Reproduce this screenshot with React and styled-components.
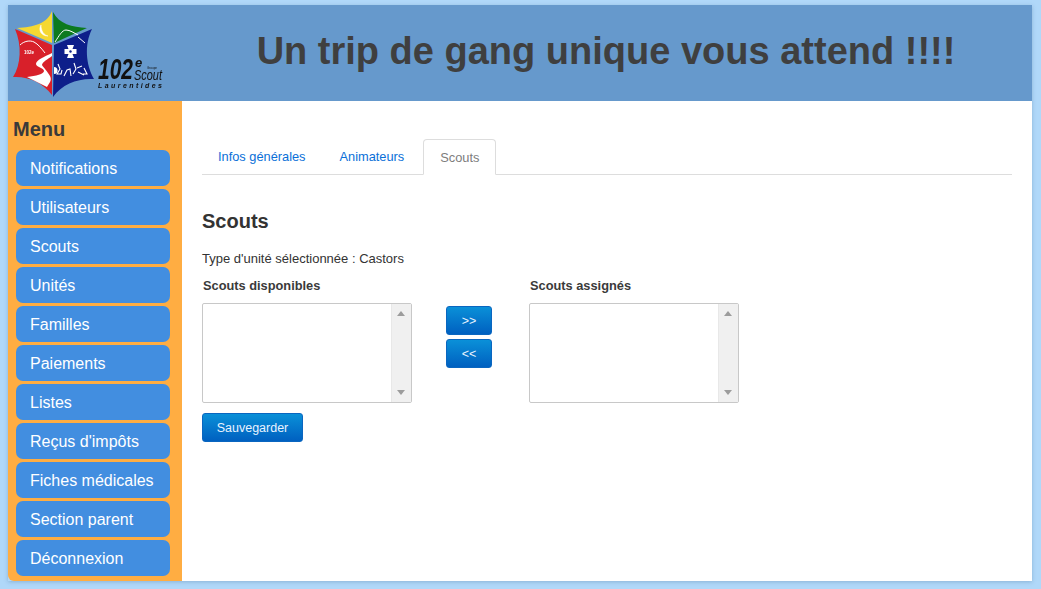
import React from 'react';
import styled, { createGlobalStyle } from 'styled-components';

const GlobalStyle = createGlobalStyle`
  html, body {
    margin: 0;
    padding: 0;
    height: 100%;
    background: #b0d8f9;
    font-family: "Liberation Sans", Arial, sans-serif;
    color: #3a3a3a;
  }
`;

const Page = styled.div`
  width: 1024px;
  height: 576px;
  margin: 5px 0 0 8px;
  display: flex;
  flex-direction: column;
  box-shadow: 0 1px 4px rgba(70, 110, 150, 0.35);
`;

const Banner = styled.header`
  height: 96px;
  flex: none;
  background: #6699cc;
  display: flex;
  align-items: center;
`;

const LogoBox = styled.div`
  width: 174px;
  flex: none;
  height: 100%;
  padding: 5px 0 0 4px;
  box-sizing: border-box;
  filter: blur(0.35px);
`;

const Slogan = styled.h1`
  flex: 1;
  margin: 0 2px 3px 0;
  text-align: center;
  font-size: 38px;
  font-weight: bold;
  color: #3f3f3f;
`;

const Body = styled.div`
  flex: 1;
  display: flex;
  min-height: 0;
`;

const Sidebar = styled.nav`
  width: 174px;
  flex: none;
  background: #ffad42;
  padding: 17px 12px 0 8px;
  box-sizing: border-box;
  border-bottom-left-radius: 6px;
`;

const MenuTitle = styled.div`
  font-size: 20px;
  font-weight: bold;
  line-height: 23px;
  margin: 0 0 9px -3px;
  color: #3a3a3a;
`;

const MenuList = styled.ul`
  list-style: none;
  margin: 0;
  padding: 0;
  display: flex;
  flex-direction: column;
  gap: 3px;
`;

const MenuItem = styled.li`
  height: 36px;
  line-height: 38px;
  background: #428ee0;
  border-radius: 7px;
  color: #fff;
  font-size: 16px;
  padding-left: 14px;
`;

const Main = styled.main`
  flex: 1;
  background: #fff;
  padding: 38px 20px 0;
`;

const Tabs = styled.div`
  display: flex;
  height: 35px;
  border-bottom: 1px solid #dddddd;
`;

const Tab = styled.div`
  box-sizing: border-box;
  line-height: 36px;
  font-size: 12.8px;
  padding: 0 16px;
  margin-right: 2px;
  color: ${p => (p.$active ? '#7d7d7d' : '#0a6fd8')};
  ${p =>
    p.$active &&
    `
    margin-left: 1px;
    background: #fff;
    height: 36px;
    border: 1px solid #dddddd;
    border-bottom-color: #fff;
    border-radius: 4px 4px 0 0;
  `}
`;

const Heading = styled.h2`
  margin: 34px 0 0;
  font-size: 20px;
  line-height: 24px;
  font-weight: bold;
  color: #333;
`;

const Info = styled.p`
  margin: 18px 0 0;
  font-size: 13px;
  line-height: 16px;
  color: #333;
`;

const Picker = styled.div`
  display: flex;
  margin-top: 10px;
`;

const Column = styled.div`
  width: 210px;
  flex: none;
`;

const ColLabel = styled.div`
  font-size: 12.8px;
  font-weight: bold;
  line-height: 18px;
  height: 17px;
  margin-left: 1px;
  margin-bottom: 9px;
  color: #3a3a3a;
`;

const ListBox = styled.div`
  height: 100px;
  box-sizing: border-box;
  border: 1px solid #c8c8c8;
  border-radius: 2px;
  display: flex;
  justify-content: flex-end;
  background: #fff;
`;

const ScrollTrack = styled.div`
  width: 20px;
  background: #f0f0f0;
  border-left: 1px solid #e8e8e8;
  box-sizing: border-box;
  display: flex;
  flex-direction: column;
  justify-content: space-between;
  align-items: center;
  padding: 7px 2px 7px 0;
`;

const Arrow = styled.span`
  width: 0;
  height: 0;
  border-left: 4.5px solid transparent;
  border-right: 4.5px solid transparent;
  ${p =>
    p.$up
      ? 'border-bottom: 5px solid #9c9c9c;'
      : 'border-top: 5px solid #9c9c9c;'}
`;

const MoveButtons = styled.div`
  width: 117px;
  flex: none;
  display: flex;
  flex-direction: column;
  gap: 4px;
  padding: 29px 0 0 34px;
  box-sizing: border-box;
`;

const BlueButton = styled.button`
  display: block;
  width: ${p => p.$w}px;
  height: 29px;
  padding: 0;
  font-family: "Liberation Sans", Arial, sans-serif;
  font-size: 12.5px;
  color: #e8f3ff;
  border: 1px solid #0a66c0;
  border-radius: 3px;
  background: linear-gradient(to bottom, #0a90d8, #0060c0);
`;

const SaveRow = styled.div`
  margin-top: 10px;
`;

const items = [
  'Notifications',
  'Utilisateurs',
  'Scouts',
  'Unités',
  'Familles',
  'Paiements',
  'Listes',
  "Reçus d'impôts",
  'Fiches médicales',
  'Section parent',
  'Déconnexion',
];

// the troop logo: four coloured sails plus the wordmark on the right
const Logo = () => (
  <svg width="160" height="88" viewBox="0 0 160 88" fontFamily="Liberation Sans, Arial, sans-serif">
    <path d="M40 1 C35 14 22 17 5 18 L40 33 Z" fill="#f5d832" />
    <path d="M41 2 C47 14 60 17 75 18 L42 33 Z" fill="#0c7a1e" />
    <path d="M80 19 C72 35 74 55 82 69 C66 68 50 74 41 87 L42 35 Z" fill="#0e1f8a" />
    <path d="M3 19 C10 35 9 55 1 67 C16 66 30 72 40 85 L40 35 Z" fill="#d8202a" />
    <path d="M29 15 C26 20 29 26 36 26 C32 25 29 21 29 15 Z" fill="#fff" stroke="#fff" strokeWidth="0.5" />
    <path d="M43 32 C47 26 50 20 54 20 C58 20 62 23 66 25" fill="none" stroke="#fff" strokeWidth="1" />
    <path d="M8 35 C12 31 18 30 22 32 C26 34 30 39 33 43" fill="none" stroke="#fff" strokeWidth="1" />
    <text x="12" y="44" fontSize="4.5" fontWeight="bold" fill="#fff">102e</text>
    <path d="M40 43 C32 47 24 50 24 54 C24 57 32 58 32 61 C32 64 24 66 15 67 L35 77 C38 72 40 70 38 66 C36 62 31 57 30 55 C30 52 36 49 40 46 Z" fill="#fff" />
    <path d="M55 35 h7 l-1.5 4 h4 v5 h-4 l1.5 4 h-7 l1.5 -4 h-4 v-5 h4 Z" fill="#fff" />
    <circle cx="58.5" cy="41.5" r="1.2" fill="#0e1f8a" />
    <path d="M66 27 L73 33" stroke="#fff" strokeWidth="1" />
    <path d="M42 57 a3.5 3.5 0 0 1 0 7 Z" fill="#fff" />
    <path d="M46 54 l2 5 -3 5 h4 l1 -4 M52 66 l3 -6 3 -1 1 7 M62 53 l2 6 -3 5 M65 58 l5 -2 M66 62 l6 3 M72 58 l3 6 h-4" fill="none" stroke="#fff" strokeWidth="1.1" />
    <text x="86" y="69" fontSize="29" fontWeight="bold" fontStyle="italic" fill="#111" textLength="35" lengthAdjust="spacingAndGlyphs">102</text>
    <text x="123" y="57" fontSize="13" fontWeight="bold" fontStyle="italic" fill="#111">e</text>
    <text x="135" y="59" fontSize="4" fill="#111" textLength="10" lengthAdjust="spacingAndGlyphs">Groupe</text>
    <text x="122" y="70" fontSize="14" fontStyle="italic" fill="#111" textLength="28" lengthAdjust="spacingAndGlyphs">Scout</text>
    <text x="86" y="78" fontSize="7" fontWeight="bold" fontStyle="italic" fill="#111" textLength="64">Laurentides</text>
  </svg>
);

const App = () => (
  <>
    <GlobalStyle />
    <Page>
      <Banner>
        <LogoBox>
          <Logo />
        </LogoBox>
        <Slogan>Un trip de gang unique vous attend !!!!</Slogan>
      </Banner>
      <Body>
        <Sidebar>
          <MenuTitle>Menu</MenuTitle>
          <MenuList>
            {items.map(item => (
              <MenuItem key={item}>{item}</MenuItem>
            ))}
          </MenuList>
        </Sidebar>
        <Main>
          <Tabs>
            <Tab>Infos générales</Tab>
            <Tab>Animateurs</Tab>
            <Tab $active>Scouts</Tab>
          </Tabs>
          <Heading>Scouts</Heading>
          <Info>Type d'unité sélectionnée : Castors</Info>
          <Picker>
            <Column>
              <ColLabel>Scouts disponibles</ColLabel>
              <ListBox>
                <ScrollTrack>
                  <Arrow $up />
                  <Arrow />
                </ScrollTrack>
              </ListBox>
            </Column>
            <MoveButtons>
              <BlueButton $w={46}>&gt;&gt;</BlueButton>
              <BlueButton $w={46}>&lt;&lt;</BlueButton>
            </MoveButtons>
            <Column>
              <ColLabel>Scouts assignés</ColLabel>
              <ListBox>
                <ScrollTrack>
                  <Arrow $up />
                  <Arrow />
                </ScrollTrack>
              </ListBox>
            </Column>
          </Picker>
          <SaveRow>
            <BlueButton $w={101}>Sauvegarder</BlueButton>
          </SaveRow>
        </Main>
      </Body>
    </Page>
  </>
);

export default App;
